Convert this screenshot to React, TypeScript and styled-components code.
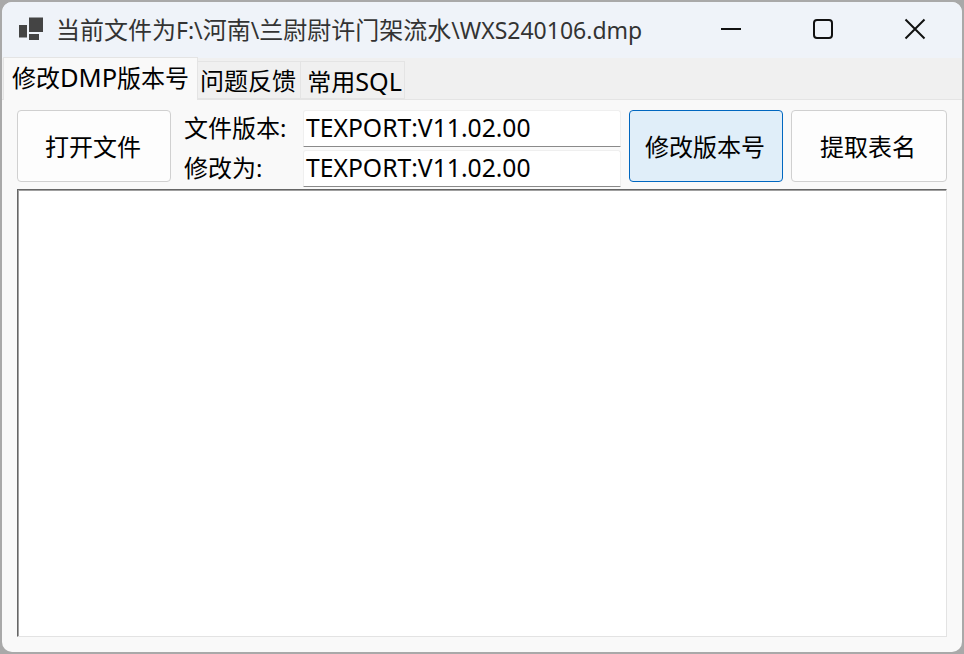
import React from "react";
import styled, { createGlobalStyle } from "styled-components";

const FONT = `"Noto Sans", "Noto Sans CJK SC", sans-serif`;

const GlobalStyle = createGlobalStyle`
  html, body {
    margin: 0;
    padding: 0;
    width: 964px;
    height: 654px;
    overflow: hidden;
    background: #a9a9a9;
  }
`;

const Window = styled.div`
  width: 960px;
  height: 650px;
  margin: 2px;
  border-radius: 10px;
  overflow: hidden;
  background: #f9f9f9;
  display: flex;
  flex-direction: column;
  font-family: ${FONT};
  color: #000;
`;

const Latin = styled.span<{ $size: number }>`
  font-size: ${(p) => p.$size}px;
`;

const TitleBar = styled.div`
  height: 56px;
  flex: none;
  background: #eff3f9;
  display: flex;
  align-items: center;
  padding: 0 1px 0 16px;
`;

const AppIcon = styled.svg`
  width: 26px;
  height: 24px;
  flex: none;
  margin-top: -3px;
`;

const TitleText = styled.div`
  margin-left: 12px;
  font-size: 24px;
  line-height: 32px;
  color: #333;
  white-space: nowrap;
  flex: 1;
`;

const WinButton = styled.div`
  width: 92px;
  height: 56px;
  margin-top: -3px;
  display: flex;
  align-items: center;
  justify-content: center;
  flex: none;
`;

const TabStrip = styled.div`
  height: 42px;
  flex: none;
  background: #f0f0f0;
  border-bottom: 1px solid #e4e4e4;
  box-sizing: border-box;
  display: flex;
  align-items: flex-end;
  padding-left: 1px;
`;

const Tab = styled.div<{ $active?: boolean; $w: number; $shift?: number }>`
  box-sizing: border-box;
  height: ${(p) => (p.$active ? "43px" : "38px")};
  margin-bottom: ${(p) => (p.$active ? "-1px" : "0")};
  width: ${(p) => p.$w}px;
  padding-left: ${(p) => Math.max(p.$shift ?? 0, 0)}px;
  padding-right: ${(p) => Math.max(-(p.$shift ?? 0), 0)}px;
  background: ${(p) => (p.$active ? "#f9f9f9" : "#f0f0f0")};
  border: 1px solid #e4e4e4;
  border-bottom: ${(p) => (p.$active ? "none" : "1px solid #e4e4e4")};
  border-left: ${(p) => (p.$active ? "1px solid #e4e4e4" : "none")};
  font-size: 24px;
  line-height: 38px;
  text-align: center;
  white-space: nowrap;
`;

const Body = styled.div`
  flex: 1;
  display: flex;
  flex-direction: column;
  padding: 10px 15px 15px 15px;
  min-height: 0;
`;

const Toolbar = styled.div`
  display: flex;
  gap: 8px;
  height: 79px;
  flex: none;
`;

const Button = styled.div<{ $primary?: boolean; $w: number }>`
  box-sizing: border-box;
  width: ${(p) => p.$w}px;
  height: 72px;
  flex: none;
  padding: 0 2px 2px 0;
  background: ${(p) => (p.$primary ? "#e0eef9" : "#fdfdfd")};
  border: 1px solid ${(p) => (p.$primary ? "#0067c0" : "#d0d0d0")};
  border-radius: 4px;
  display: flex;
  align-items: center;
  justify-content: center;
  font-size: 24px;
  white-space: nowrap;
`;

const Fields = styled.div`
  width: 437px;
  margin-left: 5px;
  display: flex;
  flex-direction: column;
  gap: 3px;
`;

const FieldRow = styled.div`
  display: flex;
  align-items: center;
  height: 37px;
`;

const FieldLabel = styled.div`
  width: 119px;
  flex: none;
  padding-bottom: 5px;
  font-size: 24px;
  white-space: nowrap;
`;

const FieldInput = styled.div`
  box-sizing: border-box;
  width: 318px;
  height: 37px;
  padding-left: 2px;
  background: #fff;
  border: 1px solid #efefef;
  border-bottom: 1px solid #8a8a8a;
  border-radius: 3px 3px 0 0;
  font-size: 24.7px;
  line-height: 34px;
  white-space: nowrap;
`;

const Output = styled.div`
  box-sizing: border-box;
  flex: 1;
  background: #fff;
  border-top: 1px solid #666;
  border-left: 1px solid #666;
  border-right: 1px solid #e3e3e3;
  border-bottom: 1px solid #e3e3e3;
  box-shadow: inset 1px 1px 0 #a0a0a0;
`;

export default function App() {
  return (
    <>
      <GlobalStyle />
      <Window>
        <TitleBar>
          <AppIcon viewBox="0 0 26 24">
            <rect x="1" y="8" width="8" height="12.5" fill="#444" />
            <rect x="11" y="0.5" width="14" height="14.5" fill="#444" />
            <rect x="11" y="17" width="10" height="6" fill="#444" />
          </AppIcon>
          <TitleText>
            当前文件为<Latin $size={23}>F:\</Latin>河南<Latin $size={23}>\</Latin>兰尉尉许门架流水
            <Latin $size={23}>\WXS240106.dmp</Latin>
          </TitleText>
          <WinButton>
            <svg width="22" height="22" viewBox="0 0 22 22">
              <path d="M1 11H21" stroke="#111" strokeWidth="2" />
            </svg>
          </WinButton>
          <WinButton>
            <svg width="22" height="22" viewBox="0 0 22 22">
              <rect x="2" y="2" width="18" height="18" rx="3" fill="none" stroke="#111" strokeWidth="2" />
            </svg>
          </WinButton>
          <WinButton>
            <svg width="22" height="22" viewBox="0 0 22 22">
              <path d="M1.5 1.5L20.5 20.5M20.5 1.5L1.5 20.5" stroke="#111" strokeWidth="2" />
            </svg>
          </WinButton>
        </TitleBar>
        <TabStrip>
          <Tab $active $w={195}>修改<Latin $size={25.5}>DMP</Latin>版本号</Tab>
          <Tab $w={103} $shift={-2}>问题反馈</Tab>
          <Tab $w={104} $shift={4}>常用<Latin $size={25.2}>SQL</Latin></Tab>
        </TabStrip>
        <Body>
          <Toolbar>
            <Button $w={154}>打开文件</Button>
            <Fields>
              <FieldRow>
                <FieldLabel>文件版本:</FieldLabel>
                <FieldInput>TEXPORT:V11.02.00</FieldInput>
              </FieldRow>
              <FieldRow>
                <FieldLabel>修改为:</FieldLabel>
                <FieldInput>TEXPORT:V11.02.00</FieldInput>
              </FieldRow>
            </Fields>
            <Button $primary $w={154}>修改版本号</Button>
            <Button $w={156}>提取表名</Button>
          </Toolbar>
          <Output />
        </Body>
      </Window>
    </>
  );
}
